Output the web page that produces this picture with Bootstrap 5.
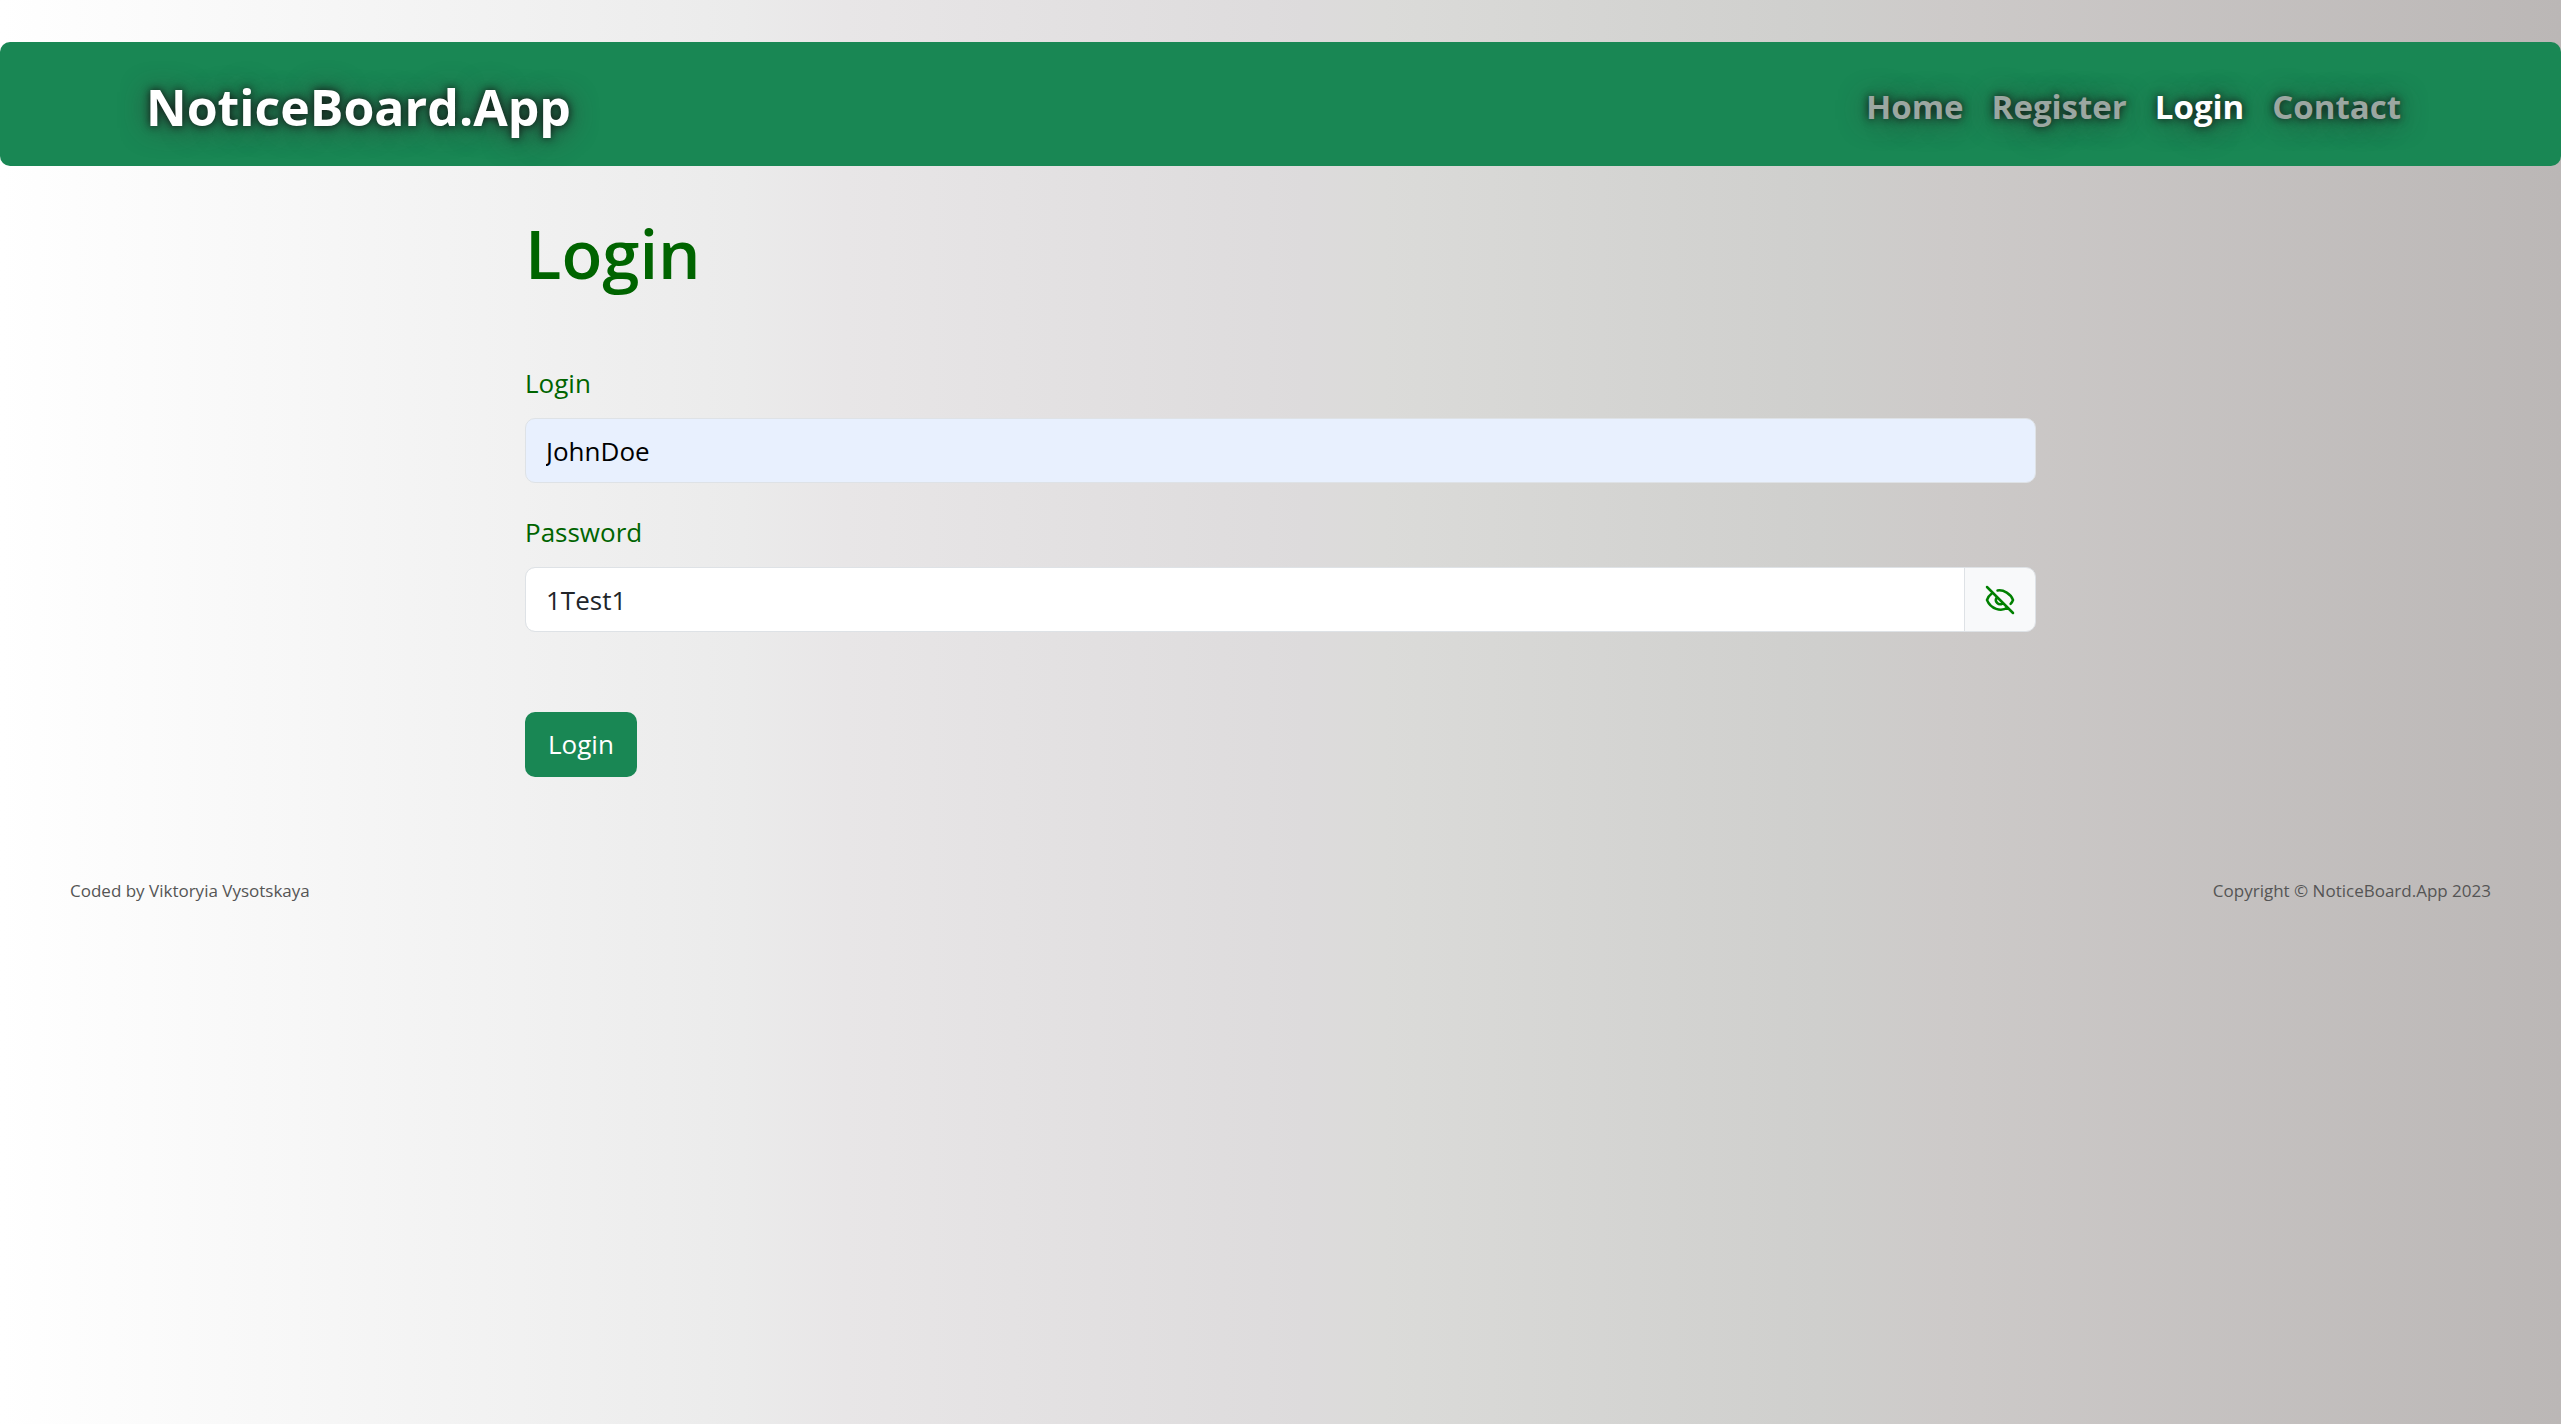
<!DOCTYPE html>
<html lang="en">
<head>
<meta charset="utf-8">
<meta name="viewport" content="width=device-width, initial-scale=1">
<title>NoticeBoard.App</title>
<link href="https://cdn.jsdelivr.net/npm/bootstrap@5.3.0/dist/css/bootstrap.min.css" rel="stylesheet">
<style>
  :root { --leaf: #198754; }
  body {
    min-height: 100vh;
    font-family: "Open Sans", "Noto Sans", sans-serif;
    font-size: 26px;
    line-height: 41px;
    background: linear-gradient(to right, #fff 0%, #ebebeb 29%, #e8e6e7 33%, #dddbdc 51%, #dbdbd9 54%, #cfcfcd 71%, #cdcac9 76%, #bbb7b6 100%);
  }
  .site-bar { background: var(--leaf); border-radius: 10px; padding: 17px 146px 11px; margin-top: 42px; min-height: 124px; }
  .site-bar .navbar-brand, .site-bar .nav-link { font-weight: 700; text-shadow: 0 0 8px #111, 0 2px 28px #333; }
  .site-bar .navbar-brand { color: #fff; font-size: 50px; line-height: 68px; padding: 0; margin: 0; }
  .site-bar .navbar-nav .nav-link { color: #9ba7a1; font-size: 33px; line-height: 52px; padding: 0 14px; }
  .site-bar .navbar-nav .nav-link.active { color: #fff; }
  .login-pane { width: 59%; margin: 46px auto 0; color: #006400; }
  .login-pane h1 { font-size: 67px; font-weight: 600; line-height: 82px; margin-bottom: 69px; }
  .login-pane .form-label { margin-bottom: 14px; }
  .login-pane .field-gap { margin-bottom: 29px; }
  .login-pane .form-control { font-size: 26px; line-height: 41px; padding: 12px 20px 10px; border: 1px solid #dee2e6; border-radius: 10px; }
  .login-pane .filled { background: #e8f0fe; color: #000; }
  .login-pane .eye-toggle { background: #f8f9fa; border: 1px solid #dee2e6; border-radius: 10px; padding: 0 20px; line-height: 1; }
  .login-pane .send { background: var(--leaf); color: #fff; font-size: 26px; line-height: 41px; padding: 12px 23px; margin-top: 51px; border: 0; border-radius: 10px; }
  .page-foot { font-size: 17px; line-height: 26px; color: #555; padding: 0 70px; margin-top: 101px; }
</style>
</head>
<body>
<header>
  <nav class="navbar navbar-expand site-bar justify-content-between">
    <a class="navbar-brand" href="#">NoticeBoard.App</a>
    <div class="navbar-nav">
      <a class="nav-link" href="#">Home</a>
      <a class="nav-link" href="#">Register</a>
      <a class="nav-link active" aria-current="page" href="#">Login</a>
      <a class="nav-link" href="#">Contact</a>
    </div>
  </nav>
</header>
<main class="login-pane">
  <h1>Login</h1>
  <form>
    <div class="field-gap">
      <label class="form-label d-block" for="user">Login</label>
      <input class="form-control filled" id="user" type="text" value="JohnDoe">
    </div>
    <div class="field-gap">
      <label class="form-label d-block" for="pass">Password</label>
      <div class="input-group">
        <input class="form-control" id="pass" type="text" value="1Test1">
        <button class="btn eye-toggle" type="button" aria-label="Hide password">
          <svg width="30" height="30" viewBox="0 0 30 30" fill="none" stroke="#008000" stroke-width="2.5" stroke-linecap="round"><path d="M2 2l26 26M12.500 5.500C18.500 4.500 26 9 28 15c-.5 1.500-1.200 2.600-2.400 3.800M7 8.200C4.800 9.800 3 12 2 15c3.600 9 14 12 20.500 7.500M11.300 13a4.300 4.300 0 0 0 6 5.600"/></svg>
        </button>
      </div>
    </div>
    <button class="btn send" type="submit">Login</button>
  </form>
</main>
<footer class="page-foot d-flex justify-content-between">
  <span>Coded by Viktoryia Vysotskaya</span>
  <span>Copyright © NoticeBoard.App 2023</span>
</footer>
<script src="https://cdn.jsdelivr.net/npm/bootstrap@5.3.0/dist/js/bootstrap.bundle.min.js"></script>
</body>
</html>
